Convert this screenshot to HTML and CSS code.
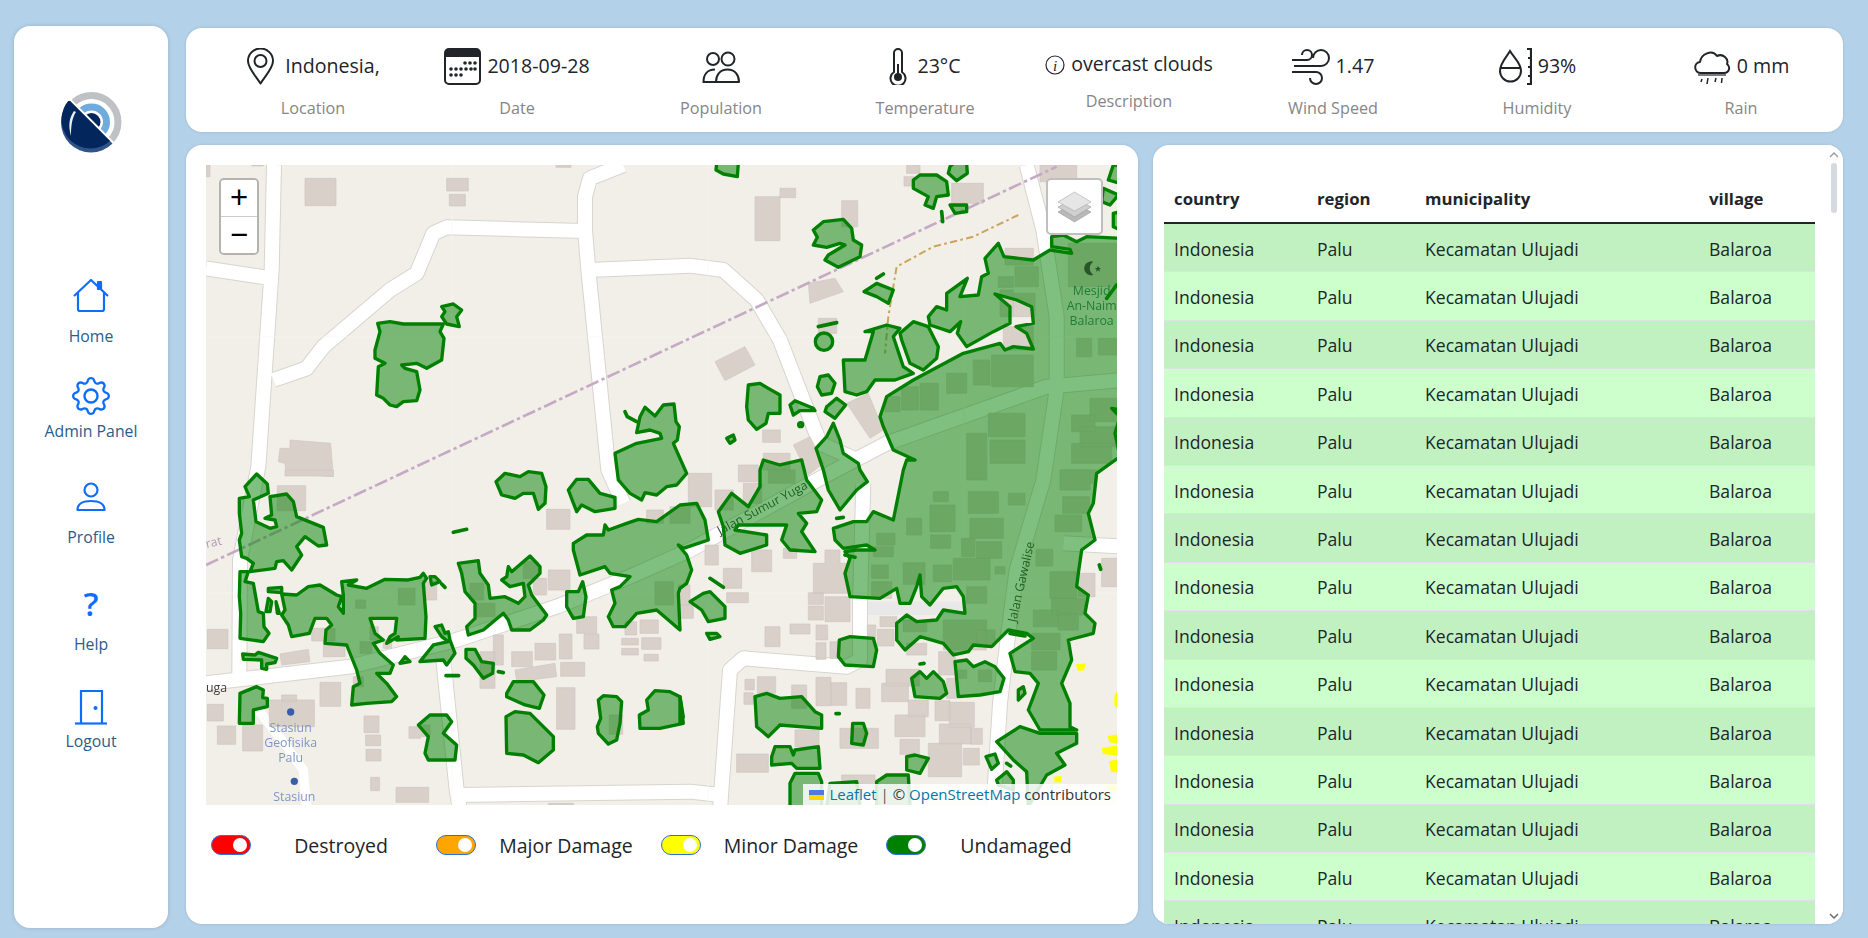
FILE: index.html
```html
<!DOCTYPE html>
<html>
<head>
<title>Damage Assessment</title>
<link rel="stylesheet" href="styles.css">
</head>
<body>

<nav class="sidebar">
  <svg class="logo" viewBox="0 0 61 61">
    <defs>
      <clipPath id="logo-upper"><polygon points="11,8 61,58 61,0 11,0"/></clipPath>
      <clipPath id="logo-lower"><polygon points="9,9 50,50 61,61 0,61 0,9"/></clipPath>
    </defs>
    <g clip-path="url(#logo-upper)">
      <circle cx="30.5" cy="30" r="26.5" fill="none" stroke="#bfc1c5" stroke-width="7"/>
      <circle cx="30.5" cy="30" r="15" fill="none" stroke="#6fabdd" stroke-width="7"/>
      <circle cx="30.5" cy="30" r="9" fill="#03265c"/>
    </g>
    <g clip-path="url(#logo-lower)">
      <circle cx="30" cy="30.5" r="30" fill="#2f5488"/>
      <circle cx="29.5" cy="27.5" r="29" fill="#03265c"/>
      <path d="M13 19 C8 26 7 34 10 44 C10 34 11 26 15 20 Z" fill="#e8edf3"/>
    </g>
  </svg>

  <a class="nav-item nav-home">
    <svg class="nav-icon" width="36" height="34" viewBox="0 0 36 34" fill="none" stroke="#0d6efd" stroke-width="2.2" stroke-linejoin="round">
      <path d="M1 17 L18 1 L35 17"/>
      <path d="M5 14 V30 a2 2 0 0 0 2 2 H29 a2 2 0 0 0 2 -2 V14"/>
      <rect x="25" y="3" width="3" height="7" fill="#0d6efd"/>
    </svg>
    <span>Home</span>
  </a>
  <a class="nav-item nav-admin">
    <svg class="nav-icon" width="38" height="38" viewBox="0 0 16 16" fill="#0d6efd">
      <path d="M8 4.754a3.246 3.246 0 1 0 0 6.492 3.246 3.246 0 0 0 0-6.492zM5.754 8a2.246 2.246 0 1 1 4.492 0 2.246 2.246 0 0 1-4.492 0z"/>
      <path d="M9.796 1.343c-.527-1.79-3.065-1.79-3.592 0l-.094.319a.873.873 0 0 1-1.255.52l-.292-.16c-1.64-.892-3.433.902-2.54 2.541l.159.292a.873.873 0 0 1-.52 1.255l-.319.094c-1.79.527-1.79 3.065 0 3.592l.319.094a.873.873 0 0 1 .52 1.255l-.16.292c-.892 1.64.901 3.434 2.541 2.54l.292-.159a.873.873 0 0 1 1.255.52l.094.319c.527 1.79 3.065 1.79 3.592 0l.094-.319a.873.873 0 0 1 1.255-.52l.292.16c1.64.893 3.434-.902 2.54-2.541l-.159-.292a.873.873 0 0 1 .52-1.255l.319-.094c1.79-.527 1.79-3.065 0-3.592l-.319-.094a.873.873 0 0 1-.52-1.255l.16-.292c.893-1.64-.902-3.433-2.541-2.54l-.292.159a.873.873 0 0 1-1.255-.52l-.094-.319zm-2.633.283c.246-.835 1.428-.835 1.674 0l.094.319a1.873 1.873 0 0 0 2.693 1.115l.291-.16c.764-.415 1.6.42 1.184 1.185l-.159.292a1.873 1.873 0 0 0 1.116 2.692l.318.094c.835.246.835 1.428 0 1.674l-.319.094a1.873 1.873 0 0 0-1.115 2.693l.16.291c.415.764-.42 1.6-1.185 1.184l-.291-.159a1.873 1.873 0 0 0-2.693 1.116l-.094.318c-.246.835-1.428.835-1.674 0l-.094-.319a1.873 1.873 0 0 0-2.692-1.115l-.292.16c-.764.415-1.6-.42-1.184-1.185l.159-.291A1.873 1.873 0 0 0 1.945 8.93l-.319-.094c-.835-.246-.835-1.428 0-1.674l.319-.094A1.873 1.873 0 0 0 3.06 4.377l-.16-.292c-.415-.764.42-1.6 1.185-1.184l.292.159a1.873 1.873 0 0 0 2.692-1.115l.094-.319z"/>
    </svg>
    <span>Admin Panel</span>
  </a>
  <a class="nav-item nav-profile">
    <svg class="nav-icon" width="30" height="30" viewBox="0 0 30 30" fill="none" stroke="#0d6efd" stroke-width="2.2">
      <circle cx="15" cy="8" r="6.5"/>
      <path d="M1.5 28 C1.5 22 7 19 15 19 C23 19 28.5 22 28.5 28 Z" stroke-linejoin="round"/>
    </svg>
    <span>Profile</span>
  </a>
  <a class="nav-item nav-help">
    <span class="help-mark">?</span>
    <span>Help</span>
  </a>
  <a class="nav-item nav-logout">
    <svg class="nav-icon" width="34" height="36" viewBox="0 0 34 36" fill="none" stroke="#0d6efd" stroke-width="2.2">
      <path d="M7 34 V2 H28 V34"/>
      <path d="M1 34.5 H33"/>
      <circle cx="21.5" cy="19" r="2" fill="#0d6efd" stroke="none"/>
    </svg>
    <span>Logout</span>
  </a>
</nav>

<main class="content">
  <section class="stats card">
    <div class="stat">
      <div class="stat-head">
        <svg class="icon-pin" width="29" height="37" viewBox="0 0 29 37" fill="none" stroke="#212529" stroke-width="2">
          <path d="M14.5 35.5 C9 27 2 20 2 13 A12.5 12.5 0 0 1 27 13 C27 20 20 27 14.5 35.5 Z" stroke-linejoin="round"/>
          <circle cx="14.5" cy="13" r="6"/>
        </svg>
        <span>Indonesia,</span>
      </div>
      <div class="stat-label">Location</div>
    </div>
    <div class="stat">
      <div class="stat-head">
        <svg width="37" height="37" viewBox="0 0 37 37">
          <rect x="1" y="1" width="35" height="35" rx="4" fill="#fff" stroke="#212529" stroke-width="2"/>
          <path d="M1 5 a4 4 0 0 1 4 -4 H32 a4 4 0 0 1 4 4 V9 H1 Z" fill="#212529"/>
          <g fill="#212529">
            <circle cx="21" cy="15" r="1.8"/><circle cx="26" cy="15" r="1.8"/><circle cx="31" cy="15" r="1.8"/>
            <circle cx="7" cy="21" r="1.8"/><circle cx="12" cy="21" r="1.8"/><circle cx="17" cy="21" r="1.8"/><circle cx="22" cy="21" r="1.8"/><circle cx="27" cy="21" r="1.8"/><circle cx="31" cy="21" r="1.8"/>
            <circle cx="7" cy="27" r="1.8"/><circle cx="12" cy="27" r="1.8"/><circle cx="17" cy="27" r="1.8"/>
          </g>
        </svg>
        <span>2018-09-28</span>
      </div>
      <div class="stat-label">Date</div>
    </div>
    <div class="stat">
      <div class="stat-head">
        <svg width="38" height="32" viewBox="0 0 38 32" fill="none" stroke="#212529" stroke-width="2">
          <circle cx="11" cy="8" r="6"/>
          <circle cx="26" cy="8" r="6.5"/>
          <path d="M14 31 H1.5 C1.5 24 5 18.5 13 18.5"/>
          <path d="M14 31 H37 C37 24 33 18.5 25.5 18.5 C18 18.5 14 24 14 31 Z" stroke-linejoin="round"/>
        </svg>
      </div>
      <div class="stat-label">Population</div>
    </div>
    <div class="stat">
      <div class="stat-head">
        <svg class="icon-therm" width="18" height="37" viewBox="0 0 18 37" fill="none" stroke="#212529" stroke-width="2">
          <path d="M5 24 V5 a4 4 0 0 1 8 0 V24 a7.5 7.5 0 1 1 -8 0 Z"/>
          <circle cx="9" cy="29" r="4" fill="#212529" stroke="none"/>
          <path d="M9 29 V16"/>
        </svg>
        <span>23°C</span>
      </div>
      <div class="stat-label">Temperature</div>
    </div>
    <div class="stat">
      <div class="stat-head stat-head-short">
        <svg width="20" height="20" viewBox="0 0 20 20">
          <circle cx="10" cy="10" r="9" fill="none" stroke="#212529" stroke-width="1.2"/>
          <text class="info-i" x="10" y="15.5" text-anchor="middle">i</text>
        </svg>
        <span>overcast clouds</span>
      </div>
      <div class="stat-label stat-label-short">Description</div>
    </div>
    <div class="stat">
      <div class="stat-head">
        <svg width="38" height="37" viewBox="0 0 38 37" fill="none" stroke="#212529" stroke-width="2">
          <path d="M0 12 H15 a5 5 0 1 0 -5 -5"/>
          <path d="M2 18 H29 a8 8 0 1 0 -8 -8"/>
          <path d="M0 24 H24 a6 6 0 1 1 -6 6"/>
        </svg>
        <span>1.47</span>
      </div>
      <div class="stat-label">Wind Speed</div>
    </div>
    <div class="stat">
      <div class="stat-head">
        <svg width="34" height="37" viewBox="0 0 34 37" fill="none" stroke="#212529" stroke-width="2">
          <path d="M12 3 C8 10 2 15 2 23 A10.5 10.5 0 0 0 23 23 C23 15 16 10 12 3 Z"/>
          <path d="M2.5 20 H22.5"/>
          <path d="M29 1 H33 V36 H29 M30 10 H33 M30 19 H33 M30 28 H33" stroke-width="2.2"/>
        </svg>
        <span>93%</span>
      </div>
      <div class="stat-label">Humidity</div>
    </div>
    <div class="stat">
      <div class="stat-head">
        <svg width="38" height="36" viewBox="0 0 38 36" fill="none" stroke="#212529" stroke-width="2">
          <path d="M8 24 C1 24 0 14 7 13 C8 5 19 0 24 7 C30 4 36 10 34 15 C38 18 36 24 31 24 Z" stroke-linejoin="round"/>
          <path d="M5 26 H33" stroke-width="1.2"/>
          <path d="M9 30 L8 33 M15 29 L14 35 M23 29 L22 33 M29 29 L28.5 34" stroke-width="1.5"/>
        </svg>
        <span>0 mm</span>
      </div>
      <div class="stat-label">Rain</div>
    </div>
  </section>

  <div class="panels">
    <section class="map-card card">
      <div class="map">
        <svg class="map-svg" width="911" height="640" viewBox="206 165 911 640">
          <defs>
            <path id="roads" d="M252 45 L245 360 L205 950 L150 1230 L148 1570
              M48 355 L245 385
              M250 690 L350 655 L400 590 L600 420 L680 370 L730 250 L770 232 L1185 243
              M1300 45 L1200 85 L1185 140 L1185 240 L1195 360 L1255 960 L1300 1060
              M1195 360 L1500 347 L1600 360 L1700 450 L1770 570 L1820 700 L1890 880 L2000 930
              M48 1600 L480 1550 L800 1470 L1100 1370 L1320 1280 L1500 1200 L1900 980 L2090 880 L2570 710 L2800 690
              M2510 45 L2560 240 L2600 500 L2600 720 L2560 990 L2480 1260 L2455 1450 L2430 1660 L2410 1980
              M2020 1000 L2010 1360 L2010 1530 L1970 1550 L1660 1525 L1620 1560 L1590 1980
              M760 1530 L800 1920 L810 1980
              M810 1935 L1500 1925 L1590 1935
              M2620 1180 L2800 1190"/>
          </defs>
          <rect x="206" y="165" width="911" height="640" fill="#f2efe9"/>
          <g transform="translate(190 150) scale(.33333)">
            <use href="#roads" class="road-casing"/>
            <use href="#roads" class="road-fill"/>
            <path class="road-thin" d="M205 1680 L290 1790 L340 1860 L350 1980"/>
            <path class="tile-seam" d="M786 45 V1965 M1554 45 V1965 M2322 45 V1965 M48 561 H2800 M48 1329 H2800"/>

            <g class="buildings">
              <path d="M345 85h93v82h-93z M770 85h65v38h-65z M778 133h48v35h-48z M48 45h12v35h-12z M185 45h35v3h-35z M1098 45h45v7h-45z M300 870 L422 880 L430 980 L288 970 L285 940 L265 935 L270 895 L300 895z"/>
              <g transform="translate(1470 0)">
                <path d="M225 140h75v132h-75z M300 115h47v28h-47z M485 152h48v78h-48z M680 45h40v25h-40z M672 80h30v28h-30z M815 100h95v60h-95z M385 400 L465 385 L490 425 L390 460z M105 635 L195 590 L225 645 L135 692z M415 505h55v45h-55z M248 840h53v37h-53z M340 885 L390 860 L430 940 L385 975z M250 910h80v50h-80z M175 945h60v50h-60z M500 760 L565 730 L610 840 L570 865z M1080 45h110v50h-110z M975 295h85v50h-85z M1005 350h70v60h-70z M955 380h45v32h-45z M1000 430h65v70h-65z M960 420h40v80h-40z M970 530h90v70h-90z M1190 565h45v55h-45z M1255 565h55v50h-55z M935 615h125v95h-125z M880 630h50v75h-50z M800 670h60v60h-60z M720 700h55v80h-55z M665 710h50v70h-50z M615 740h45v45h-45z M925 790h110v70h-110z M860 850h60v140h-60z M930 870h105v70h-105z M1230 745h80v70h-80z M1175 795h70v50h-70z M1200 830h110v60h-110z M1175 880h120v60h-120z M1150 960h100v40h-100z M1165 280h145v130h-145z"/>
              </g>
              <g transform="translate(0 960)">
                <path d="M285 0h145v18h-145z M262 47h85v75h-85z M1070 118h70v60h-70z M1370 120h50v40h-50z M1440 110h60v50h-60z M52 478h62v58h-62z M365 475h70v38h-70z M400 520h65v40h-65z M270 552 L355 538 L360 575 L275 585z M625 355h50v50h-50z M497 390h30v25h-30z M510 515h35v35h-35z M540 470h25v40h-25z M580 510h25v25h-25z M840 340h40v50h-40z M860 400h55v40h-55z M705 335h35v55h-35z M1000 275h45v50h-45z M1030 325h40v50h-40z M1075 300h65v60h-65z M1160 440h60v50h-60z M1182 492h45v45h-45z M1305 455h35v40h-35z M1350 450h55v40h-55z M1295 505h50v20h-50z M1355 503h58v35h-58z M1295 535h50v20h-50z M1362 553h43v20h-43z M910 495h30v90h-30z M870 545h45v110h-45z M965 545h62v45h-62z M1035 520h62v50h-62z M1108 492h38v75h-38z M975 600 L1095 580 L1100 620 L980 635z M1112 577h72v42h-72z M490 620h30v30h-30z M390 637h62v72h-62z M1100 653h55v125h-55z M238 690h135v80h-135z M275 675h45v20h-45z M52 703h48v50h-48z M82 768h55v55h-55z M158 765h60v78h-60z M522 738h45v50h-45z M527 795h45v32h-45z M528 838h45v35h-45z M657 770h35v35h-35z M695 765h25v35h-25z M542 922h27v40h-27z M618 952h98v45h-98z M1258 735h40v58h-40z M1075 1000h75v5h-75z M1395 335h55v70h-55z M1465 345h35v60h-35z"/>
              </g>
              <g transform="translate(1470 960)">
                <path d="M25 10h70v100h-70z M105 60h55v60h-55z M190 40h55v60h-55z M265 0h80v40h-80z M75 225h40v60h-40z M130 295h55v60h-55z M215 240h60v65h-60z M310 235h40v30h-40z M435 240 H480 V280 H500 V370 H400 V280 H435z M385 368h45v35h-45z M385 408h45v42h-45z M435 380h75v75h-75z M140 368h65v30h-65z M255 470h45v60h-45z M330 462h60v30h-60z M408 465h35v45h-35z M408 518h30v50h-30z M450 515h30v50h-30z M600 440h50v30h-50z M592 478h50v50h-50z M562 465h25v40h-25z M680 520h60v35h-60z M195 628h28v32h-28z M192 668h28v35h-28z M232 620h55v50h-55z M335 645h45v70h-45z M408 622h45v85h-45z M452 638h48v68h-48z M528 655h42v60h-42z M345 780h72v50h-72z M480 775h115v60h-115z M618 598h100v50h-100z M605 640h80v55h-80z M685 690h60v50h-60z M645 735h90v65h-90z M765 692h45v60h-45z M808 697h75v75h-75z M778 762h95v60h-95z M872 775h35v48h-35z M660 808h58v45h-58z M745 820h100v100h-100z M850 835h48v50h-48z M170 852h95v55h-95z M776 545h50v70h-50z M800 625h30v60h-30z M1265 265h45v85h-45z M1195 310h50v70h-50z M1110 305h80v80h-80z M0 405h40v40h-40z M750 105h75v80h-75z M680 145h45v50h-45z M870 145h100v60h-100z M890 215h75v50h-75z M845 205h40v55h-40z M1148 80h80v50h-80z M1125 135h80v50h-80z M1140 0h90v60h-90z M985 70h50v35h-50z M865 65h90v65h-90z M760 65h45v30h-45z M752 195h60v40h-60z M590 190h55v35h-55z M580 230h60v30h-60z M575 285h50v40h-50z M670 278h65v65h-65z M760 285h55v50h-55z M820 265h110v65h-110z M945 290h30v22h-30z M575 335h60v50h-60z M860 350h60v50h-60z M1068 238h50v50h-50z M1060 420h75v50h-75z M1115 385h100v50h-100z M1135 430h60v50h-60z M1055 490h85v50h-85z M1055 545h75v55h-75z M790 450h130v90h-130z M890 480h55v50h-55z M670 450h70v35h-70z M895 600h40v35h-40z M835 600h25v25h-25z M485 915h100v60h-100z"/>
                <rect x="565" y="395" width="285" height="40" fill="#e8e8e8" stroke="none"/>
              </g>
            </g>

            <path class="power-line" d="M48 1245 L2600 50"/>
            <path class="track" transform="translate(1470 0)" d="M1015 195 L880 260 L760 290 L650 350 L625 500 L615 610"/>

            <g class="map-labels">
              <text class="label-road" transform="translate(1590 1155) rotate(-28)">Jalan Sumur Yuga</text>
              <text class="label-road" transform="translate(2478 1418) rotate(-77)">Jalan Gawalise</text>
              <text class="label-road" x="48" y="1605" dy="22">uga</text>
              <text class="label-purple" transform="translate(50 1195) rotate(-14)">rat</text>
              <g class="label-blue">
                <circle cx="302" cy="1686" r="11"/>
                <circle cx="313" cy="1894" r="11"/>
                <text x="302" y="1745" text-anchor="middle">Stasiun</text>
                <text x="302" y="1790" text-anchor="middle">Geofisika</text>
                <text x="302" y="1835" text-anchor="middle">Palu</text>
                <text x="313" y="1953" text-anchor="middle">Stasiun</text>
              </g>
              <g class="label-teal">
                <text x="2705" y="435" text-anchor="middle">Mesjid</text>
                <text x="2705" y="480" text-anchor="middle">An-Naim</text>
                <text x="2705" y="525" text-anchor="middle">Balaroa</text>
              </g>
            </g>

            <g class="yellow" transform="translate(1470 960)">
              <polygon points="1190,585 1215,582 1210,600 1195,600"/>
              <polygon points="1305,680 1315,660 1315,715 1305,705"/>
              <polygon points="1285,800 1315,795 1315,820 1290,815"/>
              <polygon points="1268,835 1315,828 1315,855 1270,850"/>
              <polygon points="1290,875 1315,870 1315,905 1295,905"/>
              <polygon points="1280,945 1315,950 1315,965 1285,960"/>
              <polygon points="1125,922 1142,920 1142,935 1125,935"/>
            </g>

            <g class="damage">
              <polygon points="563,520 600,515 640,522 760,522 750,545 762,565 755,630 710,655 680,640 635,645 645,655 680,665 690,720 680,752 640,755 620,770 600,765 580,745 560,735 565,650 585,640 555,625 555,600 570,545"/>
              <polygon points="755,470 790,462 815,480 800,500 808,530 770,522 755,500 765,485"/>
              <polygon points="1340,848 1350,800 1365,772 1395,798 1420,765 1452,762 1458,815 1468,830 1462,870 1450,880 1490,970 1460,1005 1430,1010 1400,1035 1365,1028 1355,1050 1320,1030 1285,990 1275,910 1340,880 1415,865 1410,850 1380,840"/>
              <path class="damage-tick" d="M1305 785 L1312 800 L1340 815"/>

              <g transform="translate(1470 0)">
                <polygon points="110,40 175,40 172,80 130,72 108,60"/>
                <polygon points="700,90 720,75 770,75 800,95 805,135 770,140 760,175 735,165 745,140 700,115"/>
                <polygon points="810,50 820,40 860,40 862,70 830,92 805,70"/>
                <polygon points="810,165 860,165 860,185 825,190"/>
                <polygon points="400,240 430,215 490,208 515,235 520,270 545,285 540,320 475,352 435,330 445,315 495,285 480,280 440,292 400,285 412,262"/>
                <polygon points="552,425 590,400 640,420 625,460 590,440"/>
                <circle cx="432" cy="575" r="26"/>
                <polygon points="420,680 445,675 465,700 455,730 425,735 412,710"/>
                <polygon points="440,770 470,745 497,765 465,805 435,785"/>
                <polygon points="205,705 240,700 265,715 300,735 300,790 265,790 258,820 230,838 205,810 200,770"/>
                <polygon points="330,765 345,752 400,775 405,782 360,782 340,795"/>
                <polygon points="140,865 160,855 165,870 150,880"/>
                <polygon points="490,630 555,630 580,545 555,545 620,525 660,535 640,560 670,650 700,670 645,690 585,690 560,725 530,735 495,725"/>
                <polygon points="660,550 700,515 745,530 775,590 770,625 730,660 690,640 665,570"/>
                <polygon points="1270,115 1315,135 1290,165 1265,155"/>
                <polygon points="1300,190 1320,185 1320,240 1300,230"/>
                <polygon points="1285,90 1300,45 1320,45 1320,100"/>
                <polygon points="600,800 620,740 700,690 850,610 960,580 975,600 1000,590 1060,597 1040,550 1008,530 1060,520 1055,470 1010,450 945,432 990,470 990,520 940,545 860,590 832,550 842,515 810,545 750,525 745,500 770,470 800,480 800,430 862,385 840,440 895,435 905,380 925,370 915,325 955,280 972,320 1060,330 1110,300 1175,310 1170,298 1115,290 1115,260 1150,255 1190,275 1220,260 1330,265 1330,780 1295,775 1320,800 1305,850 1320,920 1250,970 1240,1060 1225,1090 1245,1170 1205,1200 1195,1270 1190,1310 1225,1335 1215,1390 1245,1420 1240,1450 1165,1470 1175,1530 1145,1600 1170,1660 1170,1730 1190,1740 1080,1740 1045,1680 1075,1600 1050,1570 1005,1565 990,1510 1060,1465 1040,1450 985,1440 935,1490 880,1485 865,1505 820,1515 790,1480 720,1460 675,1500 650,1470 650,1420 680,1395 710,1415 770,1410 790,1380 855,1390 850,1340 830,1310 790,1315 750,1365 725,1340 720,1275 710,1310 690,1360 660,1360 650,1315 600,1345 510,1340 495,1270 510,1225 495,1205 530,1200 585,1200 560,1185 490,1195 465,1170 460,1135 520,1115 560,1115 580,1085 640,1110 650,1060 670,960 680,930 705,930 640,900 610,830"/>
                <path class="damage-tick" d="M785 185 L788 215 M590 385 L610 372 M415 530 L470 518 M1280 445 L1310 405"/>
                <circle cx="362" cy="824" r="6"/>
              </g>

              <g transform="translate(0 960)">
                <polygon points="148,85 178,80 165,50 200,12 232,42 235,70 190,90 198,155 240,175 260,170 255,150 225,145 245,135 240,80 290,72 310,95 320,140 400,172 410,225 385,228 345,200 320,230 335,255 305,300 280,272 260,275 255,295 180,305 190,280 170,265 155,260 148,210 155,190 148,130"/>
                <polygon points="150,305 175,305 165,335 190,340 205,425 220,430 222,470 237,490 220,515 150,505 152,430 148,380"/>
                <polygon points="235,355 275,352 275,368 235,365"/>
                <polygon points="235,385 245,395 240,425 228,425"/>
                <polygon points="258,395 268,430 262,430"/>
                <polygon points="275,372 320,375 355,350 390,345 440,375 455,380 445,410 460,430 460,375 455,335 500,330 475,345 530,355 585,328 655,330 690,322 700,310 710,325 700,340 708,440 705,505 620,510 625,500 590,520 600,500 615,490 620,445 540,445 555,490 580,510 550,520 570,550 610,585 600,610 560,610 590,640 620,680 605,695 530,700 485,705 490,650 510,640 500,600 470,525 405,520 408,480 425,465 410,445 375,445 358,490 305,500 295,465 275,435 285,420"/>
                <polygon points="720,320 735,320 750,335 725,345"/>
                <polygon points="805,280 865,272 870,310 895,345 900,385 945,380 985,400 1005,380 1000,340 960,350 935,330 950,320 955,290 965,305 1020,258 1050,290 1050,310 1015,345 1025,375 1070,435 1060,450 1020,480 965,480 955,450 940,430 880,480 835,495 830,470 855,445 855,400 825,365 815,310"/>
                <polygon points="1130,365 1165,365 1178,335 1188,380 1180,440 1150,445 1130,410"/>
                <polygon points="735,470 755,465 765,490 775,485 780,510 795,550 770,585 760,570 690,575 730,525 775,515 755,500"/>
                <polygon points="630,580 645,560 660,575"/>
                <polygon points="158,552 195,555 205,547 260,565 255,578 230,582 230,598 215,595 215,570 160,568"/>
                <polygon points="828,538 855,538 875,575 910,580 908,610 880,625 850,585 828,565"/>
                <path class="damage-tick" d="M768 617 H806 M925 605 L940 608 M790 187 L830 178 M755 342 L765 352"/>
                <polygon points="150,670 200,650 220,660 218,683 232,685 232,710 190,720 190,760 148,760"/>
                <polygon points="685,765 720,735 770,735 785,755 760,790 800,825 795,870 715,870 705,850 715,800"/>
                <polygon points="950,670 970,635 1030,635 1062,675 1048,715 1005,705 950,680"/>
                <polygon points="948,740 975,725 1020,730 1060,770 1090,800 1090,840 1045,878 1000,855 950,850"/>
                <polygon points="1225,690 1240,677 1280,680 1295,695 1290,760 1280,810 1255,822 1225,790 1222,770 1232,745"/>
                <polygon points="1370,690 1395,662 1440,665 1470,680 1480,760 1410,775 1350,775 1348,735 1375,720"/>
                <polygon points="918,35 945,10 990,20 1015,5 1055,10 1068,50 1065,100 1045,118 1030,70 1000,70 975,85 935,75"/>
                <polygon points="1135,60 1160,28 1195,28 1230,70 1275,82 1275,115 1215,125 1175,105 1160,125"/>
                <polygon points="1150,220 1190,195 1240,195 1245,165 1255,180 1310,160 1345,148 1400,155 1470,105 1520,100 1545,150 1555,210 1480,235 1465,225 1490,255 1505,300 1490,340 1470,355 1465,370 1470,480 1400,420 1340,430 1305,470 1270,470 1255,440 1275,400 1265,360 1290,350 1320,320 1260,310 1245,290 1170,315 1150,240"/>
              </g>

              <g transform="translate(1470 960)">
                <polygon points="115,125 155,70 205,110 240,50 240,0 250,-30 300,-15 365,-30 380,30 425,90 410,125 355,130 380,160 365,185 405,245 330,240 305,210 320,165 175,165 165,180 260,195 260,225 180,250 135,225 130,170"/>
                <polygon points="408,-65 440,-100 460,-140 480,-90 490,-50 535,-20 540,0 562,35 530,60 480,120 445,60 430,0"/>
                <polygon points="30,395 70,370 90,365 135,410 135,445 85,455 65,420"/>
                <polygon points="80,490 110,490 120,500 90,508"/>
                <polygon points="478,510 510,500 580,505 590,540 580,590 495,585 475,560"/>
                <polygon points="695,625 720,605 740,625 760,605 790,635 800,670 780,685 705,680"/>
                <polygon points="825,575 860,570 880,590 915,575 945,590 972,625 960,665 900,675 835,680"/>
                <polygon points="1015,660 1030,650 1035,670 1015,690"/>
                <polygon points="225,680 260,670 300,685 365,680 405,725 425,735 425,775 300,765 265,800 230,770"/>
                <polygon points="518,760 550,760 560,790 550,825 515,820"/>
                <polygon points="275,860 285,830 330,830 340,855 345,840 415,830 420,895 350,895 335,880 275,885"/>
                <polygon points="680,860 705,855 745,865 720,910 680,900"/>
                <polygon points="918,860 945,852 955,880 935,898"/>
                <polygon points="950,930 980,905 1000,930 1000,960 955,945"/>
                <polygon points="330,940 345,910 415,910 425,935 425,1010 330,1010"/>
                <polygon points="590,935 620,915 685,915 690,1010 590,1010"/>
                <polygon points="440,1010 450,940 530,935 540,1010"/>
                <polygon points="950,815 1020,770 1080,790 1190,790 1190,820 1130,850 1155,885 1100,915 1045,1010 1040,905 1000,870"/>
                <polygon points="0,680 10,740 0,760"/>
                <path class="damage-tick" d="M90 325 L130 352 M470 145 L490 142 M495 255 L525 262 M720 582 L732 580 M980 880 L992 888 M1258 285 L1262 298 M468 731 L478 731 M990 490 L1035 498"/>
              </g>
            </g>

            <g transform="translate(2700 355)">
              <path class="crescent" d="M10 -20 A21 21 0 1 0 10 20 A24 24 0 0 1 10 -20 Z"/>
              <path class="crescent" d="M24 -8 L27 -1 L34 -1 L28 3 L30 10 L24 6 L18 10 L20 3 L14 -1 L21 -1 Z"/>
            </g>
          </g>
        </svg>

        <div class="zoom-control">
          <a class="zoom-btn zoom-in">+</a>
          <a class="zoom-btn">−</a>
        </div>

        <div class="layers-control">
          <svg width="33" height="32" viewBox="0 0 33 32">
            <path d="M16.5 12 L33 21 L16.5 31 L0 21 Z" fill="#b9b9b9" stroke="#999" stroke-width=".6"/>
            <path d="M16.5 7 L33 16 L16.5 26 L0 16 Z" fill="#cfcfcf" stroke="#999" stroke-width=".6"/>
            <path d="M16.5 1 L33 11 L16.5 20 L0 11 Z" fill="#e6e6e6" stroke="#aaa" stroke-width=".6"/>
          </svg>
        </div>

        <div class="attribution">
          <svg class="flag" width="15" height="10" viewBox="0 0 15 10"><rect width="15" height="5" fill="#4C7BE1"/><rect y="5" width="15" height="5" fill="#FFD500"/></svg>
          <a>Leaflet</a> <span class="attr-sep">|</span> © <a>OpenStreetMap</a> contributors
        </div>
      </div>

      <div class="legend">
        <div class="legend-item"><span class="switch switch-red"></span><span class="legend-label">Destroyed</span></div>
        <div class="legend-item"><span class="switch switch-orange"></span><span class="legend-label">Major Damage</span></div>
        <div class="legend-item"><span class="switch switch-yellow"></span><span class="legend-label">Minor Damage</span></div>
        <div class="legend-item"><span class="switch switch-green"></span><span class="legend-label">Undamaged</span></div>
      </div>
    </section>

    <section class="table-card card">
      <table class="buildings-table">
        <colgroup><col class="col-country"><col class="col-region"><col class="col-muni"><col class="col-village"></colgroup>
        <thead>
          <tr><th>country</th><th>region</th><th>municipality</th><th>village</th></tr>
        </thead>
        <tbody>
          <tr><td>Indonesia</td><td>Palu</td><td>Kecamatan Ulujadi</td><td>Balaroa</td></tr>
          <tr><td>Indonesia</td><td>Palu</td><td>Kecamatan Ulujadi</td><td>Balaroa</td></tr>
          <tr><td>Indonesia</td><td>Palu</td><td>Kecamatan Ulujadi</td><td>Balaroa</td></tr>
          <tr><td>Indonesia</td><td>Palu</td><td>Kecamatan Ulujadi</td><td>Balaroa</td></tr>
          <tr><td>Indonesia</td><td>Palu</td><td>Kecamatan Ulujadi</td><td>Balaroa</td></tr>
          <tr><td>Indonesia</td><td>Palu</td><td>Kecamatan Ulujadi</td><td>Balaroa</td></tr>
          <tr><td>Indonesia</td><td>Palu</td><td>Kecamatan Ulujadi</td><td>Balaroa</td></tr>
          <tr><td>Indonesia</td><td>Palu</td><td>Kecamatan Ulujadi</td><td>Balaroa</td></tr>
          <tr><td>Indonesia</td><td>Palu</td><td>Kecamatan Ulujadi</td><td>Balaroa</td></tr>
          <tr><td>Indonesia</td><td>Palu</td><td>Kecamatan Ulujadi</td><td>Balaroa</td></tr>
          <tr><td>Indonesia</td><td>Palu</td><td>Kecamatan Ulujadi</td><td>Balaroa</td></tr>
          <tr><td>Indonesia</td><td>Palu</td><td>Kecamatan Ulujadi</td><td>Balaroa</td></tr>
          <tr><td>Indonesia</td><td>Palu</td><td>Kecamatan Ulujadi</td><td>Balaroa</td></tr>
          <tr><td>Indonesia</td><td>Palu</td><td>Kecamatan Ulujadi</td><td>Balaroa</td></tr>
          <tr><td>Indonesia</td><td>Palu</td><td>Kecamatan Ulujadi</td><td>Balaroa</td></tr>
        </tbody>
      </table>
      <div class="scrollbar">
        <svg width="10" height="6" viewBox="0 0 10 6"><path d="M1 5 L5 1 L9 5" fill="none" stroke="#9aa0a6" stroke-width="1.5"/></svg>
        <div class="scroll-thumb"></div>
        <svg class="scroll-down" width="10" height="6" viewBox="0 0 10 6"><path d="M1 1 L5 5 L9 1" fill="none" stroke="#6b7075" stroke-width="1.5"/></svg>
      </div>
    </section>
  </div>
</main>

</body>
</html>
```

FILE: styles.css
```css
body {
  margin: 0;
  height: 938px;
  overflow: hidden;
  display: flex;
  background-color: #b3d1e9;
  font-family: "Open Sans", "Noto Sans", sans-serif;
  font-size: 16px;
  color: #212529;
}

.card {
  background-color: white;
  border-radius: 16px;
  box-shadow: 0 0 3px rgba(0, 0, 0, 0.12);
}

/* sidebar */
.sidebar {
  width: 154px;
  height: 902px;
  margin: 26px 18px 0 14px;
  background-color: white;
  border-radius: 16px;
  box-shadow: 0 0 4px rgba(0, 0, 0, 0.15);
  display: flex;
  flex-direction: column;
  align-items: center;
  flex-shrink: 0;
}

.logo {
  width: 61px;
  height: 61px;
  margin-top: 66px;
}

.nav-item {
  display: flex;
  flex-direction: column;
  align-items: center;
  color: #2b5c8c;
  line-height: 22px;
  font-size: 15.8px;
}

.nav-icon {
  display: block;
}

.nav-home { margin-top: 126px; }
.nav-home .nav-icon { margin-bottom: 12px; }
.nav-admin { margin-top: 30px; }
.nav-admin .nav-icon { margin-bottom: 5px; }
.nav-profile { margin-top: 40px; }
.nav-profile .nav-icon { margin-bottom: 14px; }
.nav-help { margin-top: 38px; }
.nav-logout { margin-top: 34px; }
.nav-logout .nav-icon { margin-bottom: 5px; }

.help-mark {
  color: #0d6efd;
  font-weight: 600;
  font-size: 33px;
  line-height: 36px;
  margin-bottom: 11px;
}

/* main area */
.content {
  width: 1657px;
  padding-top: 28px;
  display: flex;
  flex-direction: column;
}

.stats {
  height: 104px;
  padding: 20px 0 0 25px;
  box-sizing: border-box;
  display: grid;
  grid-template-columns: repeat(8, 204px);
}

.stat {
  text-align: center;
}

.stat-head {
  height: 37px;
  display: flex;
  align-items: center;
  justify-content: center;
  gap: 6px;
  font-size: 19.6px;
}

.stat-head span {
  padding-bottom: 3px;
}

.stat-head-short {
  height: 33px;
}

.icon-pin, .icon-therm {
  margin-right: 4px;
}

.info-i {
  font-family: "Liberation Serif", serif;
  font-style: italic;
  font-size: 15px;
  fill: #212529;
}

.stat-label {
  margin-top: 12px;
  line-height: 22px;
  font-size: 16.2px;
  color: #868686;
}

.stat-label-short {
  margin-top: 9px;
}

.panels {
  margin-top: 13px;
  height: 779px;
  display: flex;
  gap: 15px;
}

/* map */
.map-card {
  width: 952px;
  padding: 20px 20px 0;
  box-sizing: border-box;
}

.map {
  position: relative;
  width: 911px;
  height: 640px;
  overflow: hidden;
}

.map-svg {
  display: block;
  filter: blur(0.4px);
}

.road-casing {
  fill: none;
  stroke: #d8d4cf;
  stroke-width: 48;
  stroke-linejoin: round;
}

.road-fill {
  fill: none;
  stroke: white;
  stroke-width: 42;
  stroke-linejoin: round;
}

.road-thin {
  fill: none;
  stroke: white;
  stroke-width: 28;
  stroke-linejoin: round;
}

.tile-seam {
  fill: none;
  stroke: #f8f6f2;
  stroke-width: 2;
}

.buildings {
  fill: #d9d0c9;
  stroke: #cfc6bf;
  stroke-width: 2;
}

.power-line {
  fill: none;
  stroke: #c5aac5;
  stroke-width: 8;
  stroke-dasharray: 40 10 10 10;
}

.track {
  fill: none;
  stroke: #c9a65c;
  stroke-width: 6;
  stroke-dasharray: 22 10 8 10;
}

.map-labels text {
  font-family: "Open Sans", "Noto Sans", sans-serif;
  font-size: 37px;
}

.label-road {
  fill: #3f3f3f;
}

.label-purple {
  fill: #b99ab9;
}

.label-blue {
  fill: #7f95cc;
}

.label-blue circle {
  fill: #3a5da8;
}

.label-teal {
  fill: #3d7a6a;
}

.yellow {
  fill: #ffff00;
  stroke: #ffff00;
  stroke-width: 4;
}

.damage polygon,
.damage circle {
  fill: #008000;
  fill-opacity: 0.5;
  stroke: #008000;
  stroke-width: 10;
  stroke-linejoin: round;
}

.damage-tick {
  fill: none;
  stroke: #008000;
  stroke-width: 11;
  stroke-linecap: round;
}

.crescent {
  fill: #2a552a;
}

.zoom-control {
  position: absolute;
  left: 13px;
  top: 13px;
  width: 36px;
  border: 2px solid rgba(0, 0, 0, 0.25);
  border-radius: 5px;
  background-clip: padding-box;
}

.zoom-btn {
  display: block;
  height: 36px;
  background-color: white;
  text-align: center;
  line-height: 36px;
  font-family: "Liberation Sans", sans-serif;
  font-weight: 400;
  font-size: 31px;
  color: black;
  border-radius: 0 0 3px 3px;
}

.zoom-in {
  border-bottom: 1px solid #ccc;
  border-radius: 3px 3px 0 0;
}

.layers-control {
  position: absolute;
  left: 840px;
  top: 13px;
  width: 53px;
  height: 53px;
  background-color: white;
  border: 2px solid rgba(0, 0, 0, 0.25);
  border-radius: 5px;
  display: flex;
  align-items: center;
  justify-content: center;
}

.attribution {
  position: absolute;
  right: 0;
  bottom: 0;
  height: 21px;
  padding: 0 6px 0 6px;
  background-color: rgba(255, 255, 255, 0.85);
  font-size: 15px;
  line-height: 21px;
  color: #333;
  white-space: nowrap;
}

.attribution a {
  color: #0078a8;
}

.flag {
  margin-right: 1px;
}

.attr-sep {
  color: #555;
}

.legend {
  margin: 30px 0 0 5px;
  display: grid;
  grid-template-columns: repeat(4, 225px);
}

.legend-item {
  display: flex;
  align-items: center;
  height: 20px;
}

.switch {
  position: relative;
  flex-shrink: 0;
  width: 38px;
  height: 18px;
  border: 1px solid #2b6fe0;
  border-radius: 10px;
}

.switch::after {
  content: "";
  position: absolute;
  right: 3px;
  top: 2px;
  width: 14px;
  height: 14px;
  border-radius: 50%;
  background-color: white;
}

.switch-red { background-color: #ff0000; }
.switch-orange { background-color: #ffa500; }
.switch-yellow { background-color: #ffff00; }
.switch-green { background-color: #008000; }

.legend-label {
  flex: 1;
  padding-right: 5px;
  text-align: center;
  font-size: 19.5px;
}

/* table */
.table-card {
  position: relative;
  width: 690px;
  padding: 30px 28px 0 11px;
  box-sizing: border-box;
  overflow: hidden;
}

.buildings-table {
  table-layout: fixed;
  width: 651px;
  border-collapse: collapse;
}

.col-country { width: 143px; }
.col-region { width: 108px; }
.col-muni { width: 284px; }
.col-village { width: 116px; }

.buildings-table th,
.buildings-table td {
  padding: 0 10px;
  text-align: left;
  font-size: 17.6px;
}

.buildings-table th {
  height: 47px;
  font-size: 16.8px;
  border-bottom: 2px solid #212529;
}

.buildings-table td {
  height: 45.4px;
  padding-top: 2px;
  border-bottom: 1px solid #dee2e6;
}

.buildings-table tbody tr:nth-child(odd) {
  background-color: #c1f1c1;
}

.buildings-table tbody tr:nth-child(even) {
  background-color: #ccffcc;
}

.scrollbar {
  position: absolute;
  right: 0;
  top: 0;
  bottom: 0;
  width: 18px;
  background-color: white;
  padding: 7px 0 5px;
  box-sizing: border-box;
  display: flex;
  flex-direction: column;
  align-items: center;
}

.scroll-thumb {
  margin-top: 5px;
  width: 6px;
  height: 50px;
  border-radius: 3px;
  background-color: #d4dae0;
}

.scroll-down {
  margin-top: auto;
}
```
